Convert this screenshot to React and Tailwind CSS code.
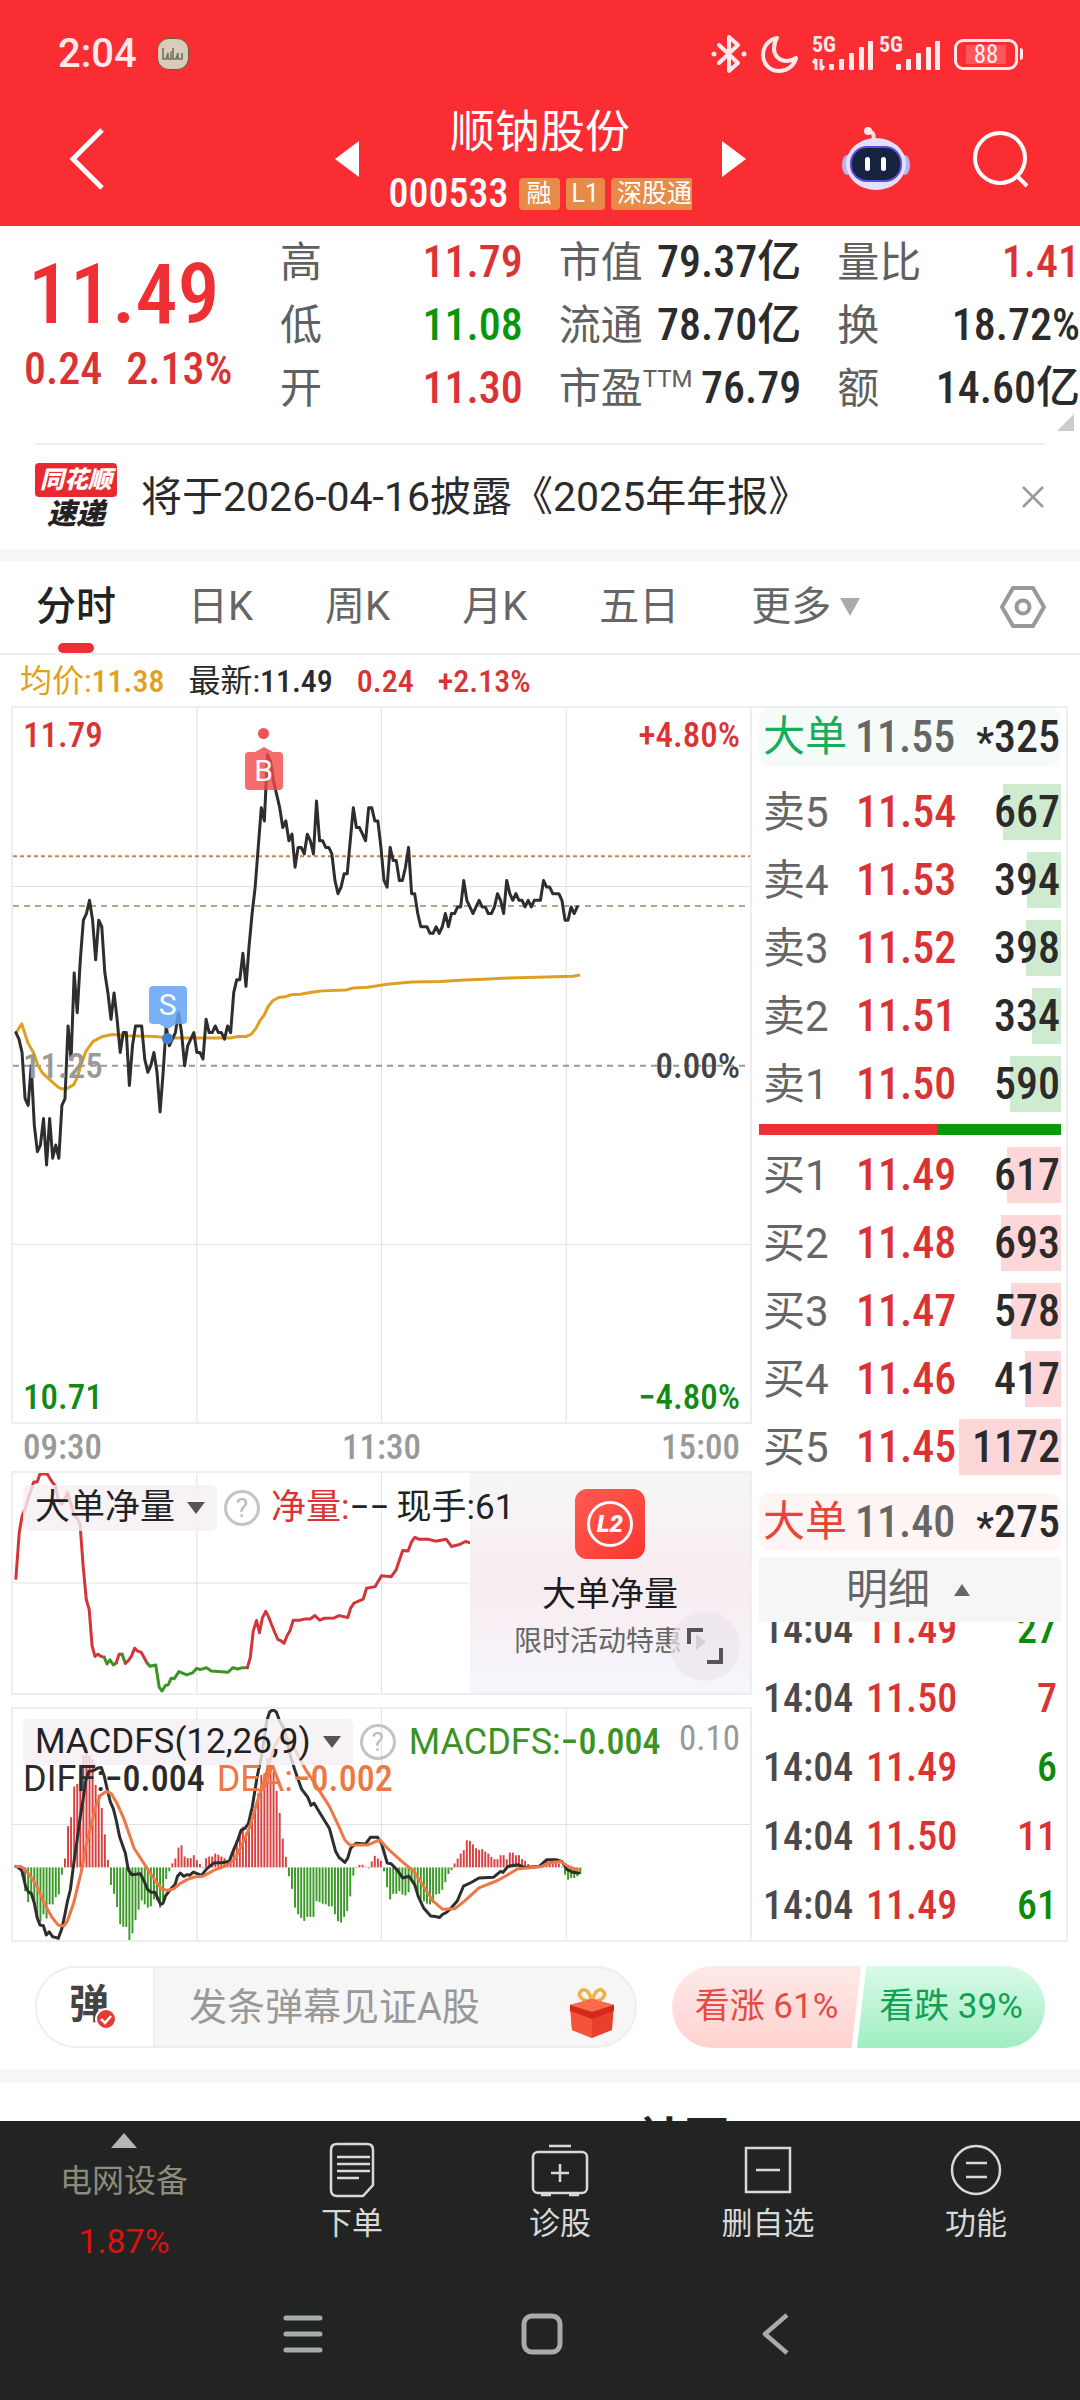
import { useState } from 'react'

const TABS = ['分时', '日K', '周K', '月K', '五日']

const STATS = [
  [
    { label: '高', value: '11.79', tone: 'text-[#db3333]' },
    { label: '低', value: '11.08', tone: 'text-[#0a960a]' },
    { label: '开', value: '11.30', tone: 'text-[#db3333]' }
  ],
  [
    { label: '市值', value: '79.37亿', tone: 'text-[#2b2b2b]' },
    { label: '流通', value: '78.70亿', tone: 'text-[#2b2b2b]' },
    { label: '市盈', sup: 'TTM', value: '76.79', tone: 'text-[#2b2b2b]' }
  ],
  [
    { label: '量比', value: '1.41', tone: 'text-[#db3333]' },
    { label: '换', value: '18.72%', tone: 'text-[#2b2b2b]' },
    { label: '额', value: '14.60亿', tone: 'text-[#2b2b2b]' }
  ]
]

const ASKS = [
  ['卖5', '11.54', 667],
  ['卖4', '11.53', 394],
  ['卖3', '11.52', 398],
  ['卖2', '11.51', 334],
  ['卖1', '11.50', 590]
]

const BIDS = [
  ['买1', '11.49', 617],
  ['买2', '11.48', 693],
  ['买3', '11.47', 578],
  ['买4', '11.46', 417],
  ['买5', '11.45', 1172]
]

const MAX_VOLUME = 1172

const TRADES = [
  ['14:04', '11.49', 27, 'sell'],
  ['14:04', '11.50', 7, 'buy'],
  ['14:04', '11.49', 6, 'sell'],
  ['14:04', '11.50', 11, 'buy'],
  ['14:04', '11.49', 61, 'sell']
]

// 每分钟价格与昨收 11.25 的差，单位：分
const PRICES = [
  5, 4, 2, -5, -6, 0, -9, -13, -12, -8, -15, -8, -14, -12, -14, -6, -5, 6, 1, 14,
  8, 16, 22, 23, 25, 22, 16, 22, 21, 14, 11, 7, 11, 7, 2, 5, 5, -3, 3, 6,
  6, 6, 1, -1, 0, 2, -1, -7, -1, 6, 3, 4, 5, 8, 5, 0, 3, 4, 5, 2,
  2, 1, 7, 5, 5, 6, 5, 5, 4, 6, 5, 11, 13, 13, 17, 12, 18, 23, 27, 33,
  39, 37, 47, 46, 43, 41, 39, 36, 37, 34, 35, 30, 33, 33, 32, 35, 34, 32, 40, 34,
  34, 33, 33, 32, 28, 26, 27, 29, 29, 34, 39, 36, 36, 35, 34, 39, 39, 37, 37, 33,
  28, 27, 33, 31, 31, 28, 28, 30, 33, 26, 26, 23, 21, 21, 21, 20, 20, 21, 20, 21,
  23, 21, 23, 23, 24, 24, 28, 25, 24, 23, 24, 25, 24, 24, 23, 23, 24, 26, 25, 23,
  28, 26, 25, 26, 25, 25, 24, 25, 24, 25, 25, 25, 28, 27, 27, 26, 26, 26, 25, 22,
  22, 24, 23, 24
]

const AVERAGE =
  '31,998 42,972 55,1030 67,1060 75,1095 85,1120 100,1140 118,1163 125,1168 138,1165 150,1155 158,1130 165,1095 175,1055 190,1025 210,1010 230,1004 260,1008 320,1010 345,1015 475,1015 490,1010 508,1010 518,1003 528,985 535,965 545,945 553,920 563,902 575,893 590,890 600,885 620,883 640,878 665,873 715,870 730,864 760,862 800,853 850,846 910,845 960,840 1000,838 1050,834 1110,832 1185,829 1197,826'

const NET_FLOW = [
  ['red', '30,355 37,215 43,165 50,140 57,105 62,85 67,62 74,62 80,38 95,38 100,50 105,62 112,75 118,120 125,130 131,115 137,95 143,125 150,160 156,170 163,190 169,310 176,420 182,450 188,560 194,592 200,585 207,592 213,594'],
  ['green', '213,594 219,615 225,602 232,618 238,612'],
  ['red', '238,612 244,585 250,585'],
  ['green', '250,585 257,613'],
  ['red', '257,613 263,605 270,590 276,567 282,575 290,580 302,612'],
  ['green', '302,612 308,622 320,618 327,685 333,697 340,680 346,678 352,658 358,660 368,638 384,648 396,642 405,628 412,632 425,626 435,636 470,640 480,626 490,630 500,626 510,626'],
  ['red', '510,626 516,595 522,515 529,483 535,520 541,475 548,455 554,472 560,495 567,520 573,540 580,545 586,552 592,530 598,515 605,482 618,482 630,478 640,478 650,468 660,482 670,476 690,475 700,468 718,474 724,445 731,430 750,418 757,385 775,380 788,347 808,350 818,330 825,300 832,270 843,272 850,245 857,230 865,236 885,236 900,242 922,236 933,258 950,252 962,243 975,248']
]

const MACD_BARS = [
  0, -8, -25, -72, -105, -75, -110, -155, -165, -142, -155, -112, -112, -90, -82, -22,
  27, 125, 152, 245, 253, 285, 340, 365, 340, 328, 250, 220, 180, 100, 23,
  -53, -80, -120, -172, -180, -180, -220, -200, -160, -128, -100, -112, -122, -118, -97, -100, -122, -100, -35, -12,
  12, 27, 60, 67, 33, 28, 28, 37, 22, 10, -2, 28, 33, 33, 42, 38, 33, 28, 22, 28, 60, 82, 102, 123, 105, 115, 142, 175, 225, 280, 285, 330, 310, 290, 232, 165, 87, 32,
  -27, -65, -122, -142, -153, -162, -150, -150, -150, -102, -105, -110, -112, -118, -118, -142, -163, -167, -150, -132, -88, -25, -2,
  8, 8, 2, -3, 18, 35, 27, 20,
  -12, -60, -97, -80, -80, -72, -82, -85, -75, -42, -62, -75, -95, -103, -110, -112, -108, -82, -80, -68, -45, -20, -8,
  12, 27, 42, 52, 82, 80, 70, 58, 53, 55, 48, 42, 32, 25, 25, 37, 37, 25, 45, 45, 37, 37, 25, 20, 10, 5, 5, 5, 8, 10, 20, 25, 27, 25, 12, 2,
  -22, -37, -32, -32, -27, -20
]

const DIFF =
  '30,500 38,505 43,515 50,560 56,578 62,582 68,610 74,655 80,678 87,680 93,708 99,698 106,713 112,715 118,718 125,690 131,650 137,605 143,570 150,490 156,430 163,355 169,300 175,240 181,212 190,210 200,202 207,200 213,225 220,270 226,305 232,325 238,360 245,410 257,460 263,510 270,525 288,522 296,545 303,570 310,578 318,578 325,600 330,615 335,612 340,590 350,570 360,555 365,530 371,520 378,530 385,525 390,527 398,517 415,527 425,508 440,490 460,488 472,485 480,455 490,420 497,390 505,385 512,370 520,320 530,230 540,160 550,60 556,32 563,25 570,32 577,60 585,80 592,120 600,170 610,215 622,265 635,290 642,315 648,308 655,325 680,385 693,455 700,473 706,480 712,488 718,475 724,445 735,430 755,432 765,412 780,412 788,430 794,460 800,490 808,492 820,510 832,535 845,530 857,555 864,590 875,625 890,650 900,652 908,655 915,645 922,640 930,630 945,605 958,560 975,548 990,535 1020,533 1035,515 1040,518 1050,500 1070,495 1085,503 1115,500 1130,480 1150,480 1162,485 1173,510 1185,518 1197,520'

const DEA =
  '30,500 40,500 50,510 65,540 75,565 90,615 105,655 118,678 130,680 137,665 150,610 165,520 175,440 185,380 195,320 205,285 218,272 228,280 240,310 255,360 275,445 295,490 315,535 332,568 345,573 357,568 370,552 385,540 400,532 418,530 440,512 470,495 485,475 500,430 515,380 527,320 540,260 553,200 565,140 575,112 586,103 595,115 610,150 630,205 650,250 680,318 700,380 712,420 722,435 760,435 772,427 785,420 800,445 830,485 855,515 875,560 895,605 915,630 940,628 960,605 990,565 1030,542 1070,508 1120,500 1140,488 1160,485 1175,500 1197,512'

const minuteX = (minute) => 30 + minute * 6.36

function Line({ points, color, width = 3 }) {
  return (
    <polyline
      points={points}
      fill="none"
      stroke={color}
      strokeWidth={width}
      strokeLinejoin="round"
      strokeLinecap="round"
      vectorEffect="non-scaling-stroke"
    />
  )
}

// 网格：四等分竖线，rows 为横线位置
function Grid({ top, bottom, rows }) {
  return (
    <g stroke="#e2e2e2" strokeWidth="1">
      {[405, 788, 1171].map((x) => (
        <line key={x} x1={x} x2={x} y1={top} y2={bottom} vectorEffect="non-scaling-stroke" />
      ))}
      {rows.map((y) => (
        <line key={y} x1="24" x2="1552" y1={y} y2={y} vectorEffect="non-scaling-stroke" />
      ))}
    </g>
  )
}

function Signal({ arrows }) {
  return (
    <svg width="62" height="44" viewBox="0 -5 62 44" fill="#ffe9ea" aria-hidden="true">
      <text x="0" y="15" fontSize="22" fontWeight="700" fontFamily="Roboto Condensed, Roboto, sans-serif">5G</text>
      {arrows && <path d="M4 33V22M1 26l3-4M9 22v11M12 29l-3 4" stroke="#ffe9ea" strokeWidth="3" fill="none" />}
      <rect x="17" y="27" width="5" height="6" rx="1" />
      <rect x="27" y="22" width="5" height="11" rx="1" />
      <rect x="37" y="16" width="5" height="17" rx="1" />
      <rect x="47" y="10" width="5" height="23" rx="1" />
      <rect x="56" y="4" width="5" height="29" rx="1" />
    </svg>
  )
}

function StatusBar() {
  return (
    <div className="flex items-center justify-between pt-7 pl-[58px] pr-[57px] text-[#ffe9ea]">
      <div className="flex items-center gap-5">
        <span className="text-[40px] leading-[52px] font-medium">2:04</span>
        <span className="flex h-8 w-8 items-center justify-center rounded-xl border border-[#6b5a4a] bg-[#d9cdb8]">
          <svg width="24" height="14" viewBox="0 0 24 14" fill="none" stroke="#6d7466" strokeWidth="1.6" aria-hidden="true">
            <path d="M2 1v11h3l2-6v6h3V7M9 6l2-1M12 1v11h3l2-6v6h4V6" />
          </svg>
        </span>
      </div>
      <div className="flex items-center gap-[13px]">
        <svg width="38" height="40" viewBox="0 0 38 40" fill="none" stroke="#ffe9ea" strokeWidth="4" aria-hidden="true">
          <path d="M9 11l19 18-9 8V3l9 8L9 29" strokeLinejoin="round" strokeLinecap="round" />
          <circle cx="4" cy="20" r="2.5" fill="#ffe9ea" stroke="none" />
          <circle cx="34" cy="20" r="2.5" fill="#ffe9ea" stroke="none" />
        </svg>
        <svg width="38" height="38" viewBox="0 0 38 38" fill="none" stroke="#ffe9ea" strokeWidth="4" strokeLinejoin="round" aria-hidden="true">
          <path d="M16 3C7 5 2 12 2 20c0 9 7 16 16 16 8 0 15-5 17-13-3 2-6 3-9 3-8 0-13-6-13-12 0-4 1-8 3-11z" />
        </svg>
        <div className="flex gap-[5px]">
          <Signal arrows />
          <Signal />
        </div>
        <span className="flex items-center">
          <span className="flex h-[31px] w-16 items-center justify-center rounded-[9px] border-3 border-[#ffe9ea]">
            <span className="bg-white/20 px-2 font-['Roboto_Condensed',Roboto,sans-serif] text-[25px] leading-[19px]">88</span>
          </span>
          <span className="ml-0.5 h-3 w-[3px] rounded-r bg-[#ffe9ea]" />
        </span>
      </div>
    </div>
  )
}

function Robot() {
  return (
    <svg width="68" height="64" viewBox="0 0 68 64" aria-hidden="true">
      <path d="M31 13c2-5 0-8-5-9" fill="none" stroke="#ffd9dd" strokeWidth="4" strokeLinecap="round" />
      <circle cx="26" cy="4" r="4" fill="#ffe9ec" />
      <ellipse cx="5" cy="38" rx="5" ry="10" fill="#b9b4ea" />
      <ellipse cx="63" cy="38" rx="5" ry="10" fill="#b9b4ea" />
      <ellipse cx="34" cy="37" rx="30" ry="26" fill="#e4e0fb" />
      <rect x="8" y="19" width="52" height="36" rx="17" fill="#5c4bd6" />
      <rect x="10" y="21" width="48" height="32" rx="15" fill="#16233f" />
      <rect x="23" y="30" width="5" height="14" rx="2.5" fill="#fff" />
      <rect x="39" y="30" width="5" height="14" rx="2.5" fill="#fff" />
    </svg>
  )
}

function Header() {
  return (
    <header className="bg-[#fa2d33] pb-2 text-white">
      <StatusBar />
      <div className="grid grid-cols-[1fr_auto_1fr] items-center pt-5">
        <button aria-label="返回" className="ml-[68px] justify-self-start">
          <svg width="38" height="62" viewBox="0 0 38 62" fill="none" stroke="#fff" strokeWidth="5" aria-hidden="true">
            <path d="M34 2L5 31l29 29" />
          </svg>
        </button>
        <div className="flex items-center gap-[30px]">
          <button aria-label="上一只">
            <svg width="24" height="36" viewBox="0 0 24 36" fill="#fff" aria-hidden="true"><path d="M24 0v36L0 18z" /></svg>
          </button>
          <div className="flex w-[303px] flex-col items-center">
            <h1 className="text-[45px] leading-[66px] font-normal">顺钠股份</h1>
            <div className="mt-1 flex h-12 w-full items-center gap-1.5 overflow-hidden whitespace-nowrap">
              <span className="mr-1 font-['Roboto_Condensed',Roboto,sans-serif] text-[40px] leading-12 font-medium">000533</span>
              <span className="rounded-sm bg-[#e78c48] px-2 text-[25px] leading-8">融</span>
              <span className="rounded-sm bg-[#e78c48] px-1.5 text-[25px] leading-8">L1</span>
              <span className="rounded-sm bg-[#e78c48] px-1.5 text-[25px] leading-8">深股通</span>
            </div>
          </div>
          <button aria-label="下一只">
            <svg width="24" height="36" viewBox="0 0 24 36" fill="#fff" aria-hidden="true"><path d="M0 0v36l24-18z" /></svg>
          </button>
        </div>
        <div className="flex items-center gap-[62px] justify-self-end pr-[50px]">
          <button aria-label="智能助手"><Robot /></button>
          <button aria-label="搜索">
            <svg width="58" height="58" viewBox="0 0 58 58" fill="none" stroke="#fff" strokeWidth="4" aria-hidden="true">
              <circle cx="28" cy="28" r="25" />
              <path d="M45 46l10 10" />
            </svg>
          </button>
        </div>
      </div>
    </header>
  )
}

function Quote() {
  return (
    <section className="relative flex pt-[5px] pb-[23px]">
      <div className="w-[280px] shrink-0 pt-5 pl-6 font-['Roboto_Condensed',Roboto,sans-serif] font-medium">
        <div className="pl-1 text-[84px] leading-[88px] text-[#ee3034]">11.49</div>
        <div className="flex gap-6 text-[44px] leading-[60px] text-[#db3333]">
          <span>0.24</span>
          <span>2.13%</span>
        </div>
      </div>
      <div className="grid flex-1 grid-cols-3 gap-x-9">
        {STATS.map((column) => (
          <dl key={column[0].label}>
            {column.map((item) => (
              <div key={item.label} className="flex items-center justify-between text-[42px] leading-[63px] whitespace-nowrap">
                <dt className="flex text-[#606060]">
                  {item.label}
                  {item.sup && <span className="text-2xl leading-[44px]">{item.sup}</span>}
                </dt>
                <dd className={`font-['Roboto_Condensed',Roboto,'Noto_Sans_CJK_SC',sans-serif] text-[44px] font-medium ${item.tone}`}>{item.value}</dd>
              </div>
            ))}
          </dl>
        ))}
      </div>
      <svg className="absolute right-1.5 bottom-3" width="17" height="17" viewBox="0 0 17 17" fill="#ccc" aria-hidden="true">
        <path d="M17 0v17H0z" />
      </svg>
    </section>
  )
}

function News() {
  return (
    <section className="mx-[35px] flex items-center border-t-2 border-[#eee] py-[18px]">
      <div className="flex w-[82px] flex-col items-center font-black italic">
        <span className="w-full rounded-sm bg-[#e8292f] text-center text-2xl leading-[34px] text-white">同花顺</span>
        <span className="text-[29px] leading-[34px] text-[#222]">速递</span>
      </div>
      <p className="flex-1 pl-6 text-[41px] leading-[68px] text-[#2b2b2b]">将于2026-04-16披露《2025年年报》</p>
      <button aria-label="关闭">
        <svg width="24" height="24" viewBox="0 0 24 24" stroke="#999" strokeWidth="2.5" aria-hidden="true">
          <path d="M2 2l20 20M22 2L2 22" />
        </svg>
      </button>
    </section>
  )
}

function PeriodTabs() {
  const [active, setActive] = useState('分时')

  return (
    <nav className="flex h-[94px] items-stretch border-b-2 border-[#eee] pl-9 pr-[34px] text-[40px] text-[#666]">
      <div className="flex items-stretch gap-[72px]">
        {TABS.map((tab) => (
          <button
            key={tab}
            onClick={() => setActive(tab)}
            className={`relative ${active === tab ? 'font-medium text-[#222]' : ''}`}
          >
            {tab}
            {active === tab && <span className="absolute bottom-0 left-1/2 h-2.5 w-9 -translate-x-1/2 rounded-full bg-[#ee3034]" />}
          </button>
        ))}
        <button className="flex items-center gap-2">
          更多
          <svg width="22" height="18" viewBox="0 0 22 18" fill="#aaa" aria-hidden="true"><path d="M1 0h20L11 18z" /></svg>
        </button>
      </div>
      <button aria-label="设置" className="ml-auto">
        <svg width="46" height="44" viewBox="0 0 46 44" fill="none" stroke="#999" strokeWidth="4" strokeLinejoin="round" aria-hidden="true">
          <path d="M13 3h20l11 19-11 19H13L2 22z" />
          <circle cx="23" cy="22" r="6.5" />
        </svg>
      </button>
    </nav>
  )
}

function PriceChart() {
  const points = PRICES.map((cents, minute) => `${minuteX(minute)},${1098 - cents * 19.9}`).join(' ')

  return (
    <div className="relative h-[718px] border-2 border-[#eee] font-['Roboto_Condensed',Roboto,sans-serif] text-[35px] leading-10 font-medium">
      <svg className="absolute inset-0 h-full w-full" viewBox="24 22 1528 2148" preserveAspectRatio="none" role="img" aria-label="分时走势">
        <Grid top={22} bottom={2170} rows={[559, 1636]} />
        <line x1="24" x2="1552" y1="468" y2="468" stroke="#b98a4e" strokeWidth="2" strokeDasharray="4 3" vectorEffect="non-scaling-stroke" />
        <line x1="24" x2="1552" y1="618" y2="618" stroke="#b3a586" strokeWidth="2" strokeDasharray="6 5" vectorEffect="non-scaling-stroke" />
        <line x1="24" x2="1552" y1="1098" y2="1098" stroke="#999" strokeWidth="2" strokeDasharray="6 5" vectorEffect="non-scaling-stroke" />
        <Line points={AVERAGE} color="#dfa021" />
        <Line points={points} color="#2e2e2e" />
      </svg>
      <div className="absolute top-5 left-[34%] flex -translate-x-1/2 flex-col items-center">
        <span className="h-[11px] w-[11px] rounded-full bg-[#ef5355]" />
        <svg className="mt-2" width="18" height="5" viewBox="0 0 18 5" fill="#f26a6b" aria-hidden="true"><path d="M9 0l9 5H0z" /></svg>
        <span className="h-[38px] w-[38px] rounded-sm bg-[#f44748]/80 text-center font-[Roboto,sans-serif] text-[30px] leading-[38px] font-normal text-white">B</span>
      </div>
      <div className="absolute top-[278px] left-[21%] flex -translate-x-1/2 flex-col items-center">
        <span className="h-[38px] w-[38px] rounded-sm bg-[#62a2f4]/85 text-center font-[Roboto,sans-serif] text-[30px] leading-[38px] font-normal text-white">S</span>
        <svg width="18" height="5" viewBox="0 0 18 5" fill="#7ab0f5" aria-hidden="true"><path d="M0 0h18L9 5z" /></svg>
        <span className="mt-1 h-[11px] w-[11px] rounded-full bg-[#3f7fd2]" />
      </div>
      <div className="relative flex h-full flex-col justify-between px-2.5 pt-2 pb-1">
        <div className="flex justify-between text-[#db3333]"><span>11.79</span><span>+4.80%</span></div>
        <div className="flex justify-between text-[#444]"><span className="text-[#999]">11.25</span><span>0.00%</span></div>
        <div className="flex justify-between text-[#138a13]"><span>10.71</span><span>−4.80%</span></div>
      </div>
    </div>
  )
}

function IndicatorButton({ children }) {
  return (
    <button className="flex items-center gap-3 rounded-md bg-[#f4eff3]/80 px-3 text-[35px] leading-[46px] text-[#222]">
      {children}
      <svg width="18" height="12" viewBox="0 0 18 12" fill="#555" aria-hidden="true"><path d="M0 0h18L9 12z" /></svg>
    </button>
  )
}

function HelpButton() {
  return (
    <button aria-label="指标说明" className="h-9 w-9 shrink-0 rounded-full border-3 border-[#c4c4c4] text-[26px] leading-[30px] text-[#bbb]">?</button>
  )
}

function NetFlowChart() {
  return (
    <div className="relative h-[224px] border-2 border-[#eee]">
      <svg className="absolute inset-0 h-full w-full" viewBox="24 35 1528 668" preserveAspectRatio="none" role="img" aria-label="大单净量走势">
        <Grid top={35} bottom={703} rows={[369]} />
        {NET_FLOW.map(([color, points]) => (
          <Line key={points} points={points} color={color === 'red' ? '#d23638' : '#3a9324'} />
        ))}
      </svg>
      <a
        href="#level2"
        className="absolute inset-y-0 right-0 flex w-[38%] flex-col items-center bg-linear-to-b from-[#f6f6f7] via-[#f7ecf0] to-[#f5f6fd] pt-4"
      >
        <span className="flex h-[70px] w-[70px] items-center justify-center rounded-xl bg-linear-to-br from-[#ff5a50] to-[#fb3530]">
          <span className="h-[46px] w-[46px] rounded-full border-3 border-white text-center text-2xl leading-[40px] font-black text-white italic">L2</span>
        </span>
        <span className="mt-2 text-[34px] leading-[54px] text-[#1c1c1c]">大单净量</span>
        <span className="flex items-center gap-3.5 text-[28px] leading-[42px] text-[#666]">
          限时活动特惠
          <svg width="10" height="16" viewBox="0 0 10 16" fill="#999" aria-hidden="true"><path d="M0 0l10 8-10 8z" /></svg>
        </span>
      </a>
      <button aria-label="全屏" className="absolute right-2.5 bottom-3 flex h-[70px] w-[70px] items-center justify-center rounded-full bg-[#ece6ec]/70">
        <svg width="38" height="38" viewBox="0 0 38 38" fill="none" stroke="#555" strokeWidth="4" aria-hidden="true">
          <path d="M3 17V3h14M35 21v14H21" />
        </svg>
      </button>
      <div className="relative flex items-center gap-[7px] pt-3 pl-2.5 text-[35px] leading-[46px] whitespace-nowrap text-[#222]">
        <IndicatorButton>大单净量</IndicatorButton>
        <HelpButton />
        <span className="ml-1"><span className="text-[#db3333]">净量:</span>−−</span>
        <span>现手:61</span>
      </div>
    </div>
  )
}

function MacdChart() {
  return (
    <div className="relative mt-3 h-[235px] border-2 border-[#eee] text-4xl whitespace-nowrap">
      <svg className="absolute inset-0 h-full w-full" viewBox="24 23 1528 700" preserveAspectRatio="none" role="img" aria-label="MACDFS">
        <Grid top={23} bottom={723} rows={[373]} />
        {MACD_BARS.map((value, minute) => (
          <rect
            key={minute}
            x={minuteX(minute) - 2}
            y={value > 0 ? 503 - value : 503}
            width="4"
            height={Math.abs(value)}
            fill={value > 0 ? '#dc3f40' : '#3a9a27'}
          />
        ))}
        <Line points={DIFF} color="#2e2e2e" />
        <Line points={DEA} color="#ee7743" />
      </svg>
      <div className="relative flex items-center gap-[7px] pt-2.5 pr-2.5 pl-2.5">
        <IndicatorButton>MACDFS(12,26,9)</IndicatorButton>
        <HelpButton />
        <span className="ml-1.5 leading-[46px] text-[#3a9324]">
          MACDFS:<span className="font-['Roboto_Condensed',Roboto,sans-serif] font-medium">−0.004</span>
        </span>
        <span className="ml-auto self-start font-['Roboto_Condensed',Roboto,sans-serif] text-[35px] leading-10 text-[#999]">0.10</span>
      </div>
      <div className="relative flex gap-3 pl-2.5 leading-7">
        <span className="text-[#2b2b2b]">DIFF:<span className="font-['Roboto_Condensed',Roboto,sans-serif] font-medium">−0.004</span></span>
        <span className="text-[#ee7743]">DEA:<span className="font-['Roboto_Condensed',Roboto,sans-serif] font-medium">−0.002</span></span>
      </div>
    </div>
  )
}

function BookRows({ rows, side, label }) {
  return (
    <table className="w-full table-fixed text-[44px]" aria-label={label}>
      <tbody>
        {rows.map(([level, price, volume]) => (
          <tr key={level} className="h-[68px]">
            <th className="w-[97px] p-0 pl-1 text-left text-[42px] font-normal text-[#666]" scope="row">{level}</th>
            <td className="p-0 font-['Roboto_Condensed',Roboto,sans-serif] font-medium text-[#db3333]">{price}</td>
            <td className="w-[102px] p-0">
              <div className="relative flex h-14 items-center justify-end pr-px">
                <span
                  className={`absolute inset-y-0 right-0 ${side === 'ask' ? 'bg-[#cfebcf]' : 'bg-[#fdd6d8]'}`}
                  style={{ width: `${(volume / MAX_VOLUME) * 100}%` }}
                />
                <span className="relative font-['Roboto_Condensed',Roboto,sans-serif] font-medium text-[#2b2b2b]">{volume}</span>
              </div>
            </td>
          </tr>
        ))}
      </tbody>
    </table>
  )
}

function BigOrder({ price, volume, side }) {
  return (
    <div
      className={`flex h-[58px] items-center rounded-xl pr-px pl-1 font-['Roboto_Condensed',Roboto,'Noto_Sans_CJK_SC',sans-serif] text-[44px] leading-[58px] ${
        side === 'ask' ? 'bg-[#f5fbf8]' : 'bg-[#fff5f5]'
      }`}
    >
      <span className={`w-[92px] shrink-0 text-[42px] ${side === 'ask' ? 'text-[#17ad59]' : 'text-[#ea4438]'}`}>大单</span>
      <span className="font-medium text-[#666]">{price}</span>
      <span className="ml-auto flex items-center font-medium text-[#2b2b2b]">
        <span className="pt-3 text-[40px] leading-none">*</span>
        <span>{volume}</span>
      </span>
    </div>
  )
}

function OrderBook() {
  return (
    <aside className="flex w-[316px] shrink-0 flex-col border-2 border-l-0 border-[#eee] pr-[5px] pl-[7px]">
      <BigOrder price="11.55" volume={325} side="ask" />
      <div className="pt-3 pb-1.5"><BookRows rows={ASKS} side="ask" label="卖盘" /></div>
      <div className="flex h-[11px]">
        <span className="w-[59%] bg-[#ee3034]" />
        <span className="flex-1 bg-[#069a06]" />
      </div>
      <div className="pt-1.5 pb-3"><BookRows rows={BIDS} side="bid" label="买盘" /></div>
      <BigOrder price="11.40" volume={275} side="bid" />
      <button className="mt-1.5 flex items-center justify-center gap-6 bg-[#f6f6f6] pr-1 text-[42px] leading-[65px] text-[#666]">
        明细
        <svg width="16" height="12" viewBox="0 0 16 12" fill="#666" aria-hidden="true"><path d="M8 0l8 12H0z" /></svg>
      </button>
      <div className="flex h-[318px] flex-col justify-end overflow-hidden px-1">
        <table className="w-full font-['Roboto_Condensed',Roboto,sans-serif] text-[40px] font-medium" aria-label="成交明细">
          <tbody>
            {TRADES.map(([time, price, volume, side], index) => (
              <tr key={index} className="h-[69px]">
                <td className="w-[103px] p-0 text-[#4a4a4a]">{time}</td>
                <td className="p-0 text-[#db3333]">{price}</td>
                <td className={`p-0 text-right ${side === 'buy' ? 'text-[#db3333]' : 'text-[#0a8c0a]'}`}>{volume}</td>
              </tr>
            ))}
          </tbody>
        </table>
      </div>
    </aside>
  )
}

function Market() {
  return (
    <main>
      <div className="flex gap-6 pt-px pl-5 font-['Roboto_Condensed',Roboto,'Noto_Sans_CJK_SC',sans-serif] text-[32px] leading-[50px] font-medium whitespace-nowrap">
        <span className="text-[#e0a11f]"><span className="font-normal">均价:</span>11.38</span>
        <span className="text-[#2b2b2b]"><span className="font-normal">最新:</span>11.49</span>
        <span className="text-[#db3333]">0.24</span>
        <span className="text-[#db3333]">+2.13%</span>
      </div>
      <div className="flex pr-3 pl-[11px]">
        <div className="min-w-0 flex-1">
          <PriceChart />
          <div className="grid grid-cols-3 px-3 font-['Roboto_Condensed',Roboto,sans-serif] text-[35px] leading-[47px] font-medium text-[#999]">
            <span>09:30</span>
            <span className="text-center">11:30</span>
            <span className="text-right">15:00</span>
          </div>
          <NetFlowChart />
          <MacdChart />
        </div>
        <OrderBook />
      </div>
    </main>
  )
}

function Gift() {
  return (
    <svg width="46" height="52" viewBox="0 0 46 52" aria-hidden="true">
      <path d="M22 14C12 14 8 8 12 4s10 2 10 10zm2 0c10 0 14-6 10-10s-10 2-10 10z" fill="none" stroke="#f0b04a" strokeWidth="3.5" />
      <path d="M1 18l22-6 22 6-2 25-20 8L3 43z" fill="#e8402c" />
      <path d="M23 24v27L3 43 1 18z" fill="#f4553a" />
      <path d="M1 18l22-6 22 6-22 7z" fill="#fb6b4c" />
      <path d="M1 18l22 7 22-7v6l-22 8L1 24z" fill="#d42a1d" />
    </svg>
  )
}

function Danmaku() {
  return (
    <section className="flex items-center justify-between px-[35px] pt-6 pb-[22px]">
      <div className="flex h-[82px] w-[602px] items-center overflow-hidden rounded-full border-2 border-[#eee] bg-[#f6f6f6]">
        <button aria-label="弹幕开关" className="relative h-full w-[118px] shrink-0 border-r-2 border-[#eee] bg-white pr-3 pb-1 text-[40px] font-bold text-[#444]">
          弹
          <svg className="absolute right-9 bottom-4" width="22" height="22" viewBox="0 0 22 22" aria-hidden="true">
            <circle cx="11" cy="11" r="10" fill="#e63a35" stroke="#fff" strokeWidth="2" />
            <path d="M6 11l4 4 6-7" fill="none" stroke="#fff" strokeWidth="2.5" />
          </svg>
        </button>
        <input
          type="text"
          aria-label="发送弹幕"
          placeholder="发条弹幕见证A股"
          className="min-w-0 flex-1 bg-transparent pl-[34px] text-[38px] outline-none placeholder:text-[#999]"
        />
        <button aria-label="礼物" className="mt-3 mr-5"><Gift /></button>
      </div>
      <div className="flex h-[82px] w-[373px] overflow-hidden rounded-full text-[35px] whitespace-nowrap">
        <button className="w-[189px] bg-linear-to-b from-[#ffeae8] to-[#ffd2d0] text-[#e64a45] [clip-path:polygon(0_0,100%_0,95%_100%,0_100%)]">看涨 61%</button>
        <button className="-ml-1 flex-1 bg-linear-to-b from-[#d8fbe7] to-[#a0edc2] text-[#12a150] [clip-path:polygon(5%_0,100%_0,100%_100%,0_100%)]">看跌 39%</button>
      </div>
    </section>
  )
}

function Toolbar() {
  const items = [
    {
      label: '下单',
      icon: (
        <>
          <path d="M9 2h30q6 0 6 6v35L35 54H9q-6 0-6-6V8q0-6 6-6z" />
          <path d="M9 15h33M9 22h33M9 29h33M9 36h22" />
        </>
      )
    },
    {
      label: '诊股',
      icon: (
        <>
          <rect x="-3" y="10" width="54" height="41" rx="5" />
          <path d="M13 4h22M24 22v18M15 31h18M5 53h10M33 53h10" />
        </>
      )
    },
    {
      label: '删自选',
      icon: (
        <>
          <rect x="2" y="6" width="44" height="44" />
          <path d="M12 28h24" />
        </>
      )
    },
    {
      label: '功能',
      icon: (
        <>
          <circle cx="24" cy="28" r="24" />
          <path d="M14 21h21M14 35h21" />
        </>
      )
    }
  ]

  return (
    <nav className="flex h-[149px] text-[31px] text-[#d8d8d8]">
      <a href="#sector" className="flex w-[248px] flex-col items-center pt-3">
        <svg width="26" height="15" viewBox="0 0 26 15" fill="#b5b5b5" aria-hidden="true"><path d="M13 0l13 15H0z" /></svg>
        <span className="mt-2 text-[32px] leading-[50px] text-[#8d8b7b]">电网设备</span>
        <span className="mt-2.5 text-[34px] leading-[50px] text-[#dd1111]">1.87%</span>
      </a>
      {items.map((item) => (
        <a key={item.label} href={`#${item.label}`} className="flex flex-1 flex-col items-center pt-5">
          <svg width="60" height="58" viewBox="-6 -1 60 58" fill="none" stroke="#d8d8d8" strokeWidth="2.5" aria-hidden="true">
            {item.icon}
          </svg>
          <span className="leading-[50px]">{item.label}</span>
        </a>
      ))}
    </nav>
  )
}

function SystemNav() {
  return (
    <div className="flex h-[130px] items-start justify-between pt-[42px] pr-[290px] pl-[282px]">
      <button aria-label="最近任务">
        <svg width="42" height="44" viewBox="0 0 42 44" stroke="#aaa" strokeWidth="5" strokeLinecap="round" aria-hidden="true">
          <path d="M4 6h34M4 22h34M4 38h34" />
        </svg>
      </button>
      <button aria-label="主屏幕">
        <svg width="42" height="44" viewBox="0 0 42 44" fill="none" stroke="#aaa" strokeWidth="5" aria-hidden="true">
          <rect x="3" y="4" width="36" height="36" rx="8" />
        </svg>
      </button>
      <button aria-label="返回上一级">
        <svg width="30" height="44" viewBox="0 0 30 44" fill="none" stroke="#aaa" strokeWidth="4.5" strokeLinejoin="round" aria-hidden="true">
          <path d="M27 3L5 22l22 19" />
        </svg>
      </button>
    </div>
  )
}

export default function App() {
  return (
    <div className="bg-white font-[Roboto,'Noto_Sans_CJK_SC',sans-serif]">
      <Header />
      <Quote />
      <News />
      <div className="h-3 bg-[#f6f6f6]" />
      <PeriodTabs />
      <Market />
      <Danmaku />
      <div className="h-3 bg-[#f6f6f6]" />
      <div className="h-[39px] overflow-hidden pt-8">
        <div className="flex justify-around px-8 text-[40px] leading-[58px] text-[#444]">
          <span>诊股</span>
          <span>新闻</span>
          <span>资金</span>
          <span>公告</span>
          <span className="text-[46px] leading-[50px] font-bold text-[#222]">社区</span>
          <span>简况</span>
          <span>研报</span>
        </div>
      </div>
      <footer className="bg-[#212422]">
        <Toolbar />
        <SystemNav />
      </footer>
    </div>
  )
}
